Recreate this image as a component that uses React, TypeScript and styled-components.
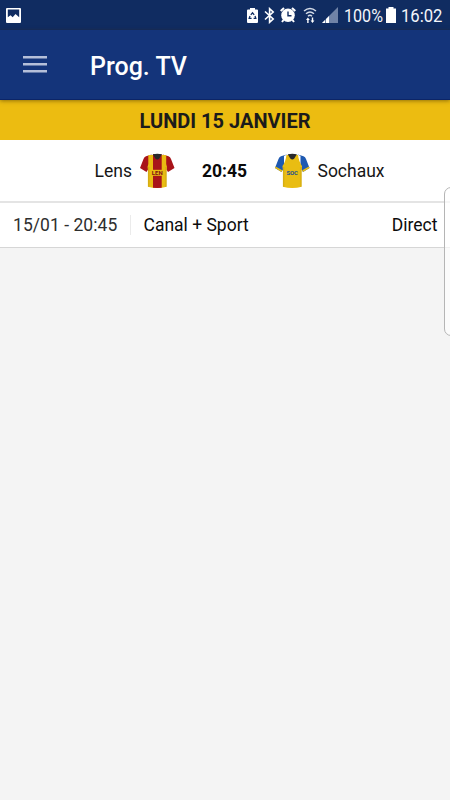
import React from "react";
import styled, { createGlobalStyle } from "styled-components";

const GlobalStyle = createGlobalStyle`
  * { box-sizing: border-box; }
  html, body { margin: 0; padding: 0; }
  body { font-family: Roboto, sans-serif; overflow: hidden; }
  svg { display: block; flex: none; }
`;

const Screen = styled.div`
  position: relative;
  width: 450px;
  height: 800px;
  overflow: hidden;
  background: #f4f4f4;
  display: flex;
  flex-direction: column;
`;

const StatusBar = styled.div`
  height: 30px;
  flex: none;
  background: #102c61;
  color: #f4f6fa;
  display: flex;
  align-items: center;
  padding: 0 7px 0 6px;
`;

const StatusIcons = styled.div`
  display: flex;
  align-items: center;
  margin-left: auto;
`;

const StatusText = styled.span<{ $width: number; $scale: number }>`
  width: ${(p) => p.$width}px;
  font-size: 18.5px;
  line-height: 30px;
  padding-top: 1px;
  white-space: nowrap;
  transform: scaleX(${(p) => p.$scale});
  transform-origin: left center;
`;

const Gap = styled.span<{ $w: number }>`
  width: ${(p) => p.$w}px;
  flex: none;
`;

const AppBar = styled.header`
  position: relative;
  z-index: 1;
  height: 70px;
  flex: none;
  background: #14347a;
  border-bottom: 1px solid #0c2567;
  box-shadow: 0 1px 4px rgba(60, 40, 0, 0.5);
  display: flex;
  align-items: center;
  padding-left: 23px;
`;

const MenuButton = styled.button`
  width: 24px;
  height: 17px;
  padding: 0;
  border: 0;
  background: none;
`;

const Title = styled.h1`
  margin: 5px 0 0 43px;
  font-size: 25px;
  font-weight: 500;
  line-height: 30px;
  color: #fff;
`;

const DateHeader = styled.h2`
  margin: 0;
  height: 40px;
  flex: none;
  background: #ecbc11;
  color: #1b1b1b;
  font-size: 20px;
  font-weight: 700;
  line-height: 42px;
  text-align: center;
`;

const MatchRow = styled.div`
  height: 63px;
  flex: none;
  background: #fff;
  border-bottom: 2px solid #e4e4e4;
  display: grid;
  grid-template-columns: 132px 43px 99px 37px 1fr;
  align-items: center;
  font-size: 17.5px;
  color: #161616;
`;

const Team = styled.span<{ $side: "home" | "away" }>`
  text-align: ${(p) => (p.$side === "home" ? "right" : "left")};
  padding-left: ${(p) => (p.$side === "away" ? 6.5 : 0)}px;
  padding-top: 1px;
`;

const ShirtSlot = styled.div<{ $inset?: number }>`
  padding-left: ${(p) => p.$inset ?? 0}px;
`;

const Kickoff = styled.strong`
  text-align: center;
  font-weight: 700;
  padding-top: 1px;
  color: #0a0a0a;
`;

const ChannelRow = styled.div`
  height: 45px;
  flex: none;
  background: #fff;
  border-bottom: 1px solid #d6d6d6;
  display: flex;
  align-items: center;
  padding: 0 12.5px 0 13px;
  font-size: 17.5px;
  line-height: 20px;
  color: #0c0c0c;
`;

const AirTime = styled.span`
  width: 118px;
  height: 20px;
  color: #2e2e2e;
  letter-spacing: 0.05px;
  border-right: 1px solid #ebebeb;
`;

const Channel = styled.span`
  flex: 1;
  padding-left: 12.5px;
`;

const EdgePanel = styled.div`
  position: absolute;
  z-index: 2;
  top: 187px;
  right: -8px;
  width: 14px;
  height: 149px;
  border: 1px solid #b5b5b5;
  border-radius: 7px;
  background: rgba(255, 255, 255, 0.65);
`;

const ShirtText = styled.text`
  font: 700 6px Roboto, sans-serif;
  text-anchor: middle;
`;

const PictureIcon = () => (
  <svg width="15" height="15" viewBox="0 0 15 15">
    <path fillRule="evenodd" fill="#fff" d="M1 0h13q1 0 1 1v13q0 1-1 1H1q-1 0-1-1V1q0-1 1-1zM1.8 1.5v7.8l2.7-2 2.2 2 2.8-3.2 3.7 3.2V1.5z" />
  </svg>
);

const RecycleBatteryIcon = () => (
  <svg width="11" height="15" viewBox="0 0 11 15">
    <path fill="#fff" d="M3 0h5v1.6h2q1 0 1 1V14q0 1-1 1H1q-1 0-1-1V2.6q0-1 1-1h2z" />
    <path fill="none" stroke="#102c61" strokeWidth="1.3" d="M3.8 6.8 5.5 4.8l1.7 2M8 8l.8 2.4H6.6M4.6 10.4H2.2L3 8" />
  </svg>
);

const BluetoothIcon = () => (
  <svg width="11" height="17" viewBox="0 0 11 17">
    <path fill="none" stroke="#fff" strokeWidth="1.6" d="M1 4.5 9.2 12 5.6 15.3V1.7L9.2 5 1 12.5" />
  </svg>
);

const AlarmIcon = () => (
  <svg width="16" height="16" viewBox="0 0 16 16">
    <circle cx="8" cy="8.2" r="6.8" fill="#fff" />
    <path stroke="#fff" strokeWidth="2" d="M.7 4 4 1M15.3 4 12 1M3.5 13 2 15M12.5 13l1.5 2" />
    <path fill="none" stroke="#102c61" strokeWidth="1.4" d="M8 4.5v4.2h3.5" />
  </svg>
);

const WifiIcon = () => (
  <svg width="14" height="17" viewBox="0 0 14 17">
    <g fill="none" stroke="#d5dce8" strokeWidth="1.5">
      <path d="M1 4Q7-1 13 4M3 6.7q4-3.5 8 0M5 9.2q2-1.8 4 0" />
    </g>
    <path fill="#fff" d="M3 13l1.9-2.5L6.8 13H5.6v3H4.2v-3zM7.6 13.5h1.2v-3h1.4v3h1.2L9.5 16z" />
  </svg>
);

const SignalIcon = () => (
  <svg width="16" height="16" viewBox="0 0 16 16">
    <path fill="#7083a7" d="M16 0v16H0z" />
    <path fill="#fff" d="M0 16l3-3v3zM4 16v-4l3-3v7z" />
  </svg>
);

const BatteryIcon = () => (
  <svg width="10" height="16" viewBox="0 0 10 16">
    <path fill="#fff" d="M2.5 0h5v1.5H10V16H0V1.5h2.5z" />
  </svg>
);

const MenuIcon = () => (
  <svg width="24" height="17" viewBox="0 0 24 17">
    <path fill="#b5bfd9" d="M0 0h24v2.5H0zM0 7h24v2.5H0zM0 14h24v2.5H0z" />
  </svg>
);

interface ShirtProps {
  id: string;
  code: string;
  body: string;
  sleeve: string;
  ink: string;
  striped?: boolean;
}

const Shirt = ({ id, code, body, sleeve, ink, striped }: ShirtProps) => (
  <svg width="37" height="37" viewBox="0 0 37 37">
    <defs>
      <linearGradient id={`${id}-shade`} x1="0" x2="1" y1="0" y2="0">
        <stop offset="0" stopColor="#000" stopOpacity=".12" />
        <stop offset=".12" stopColor="#000" stopOpacity="0" />
        <stop offset=".88" stopColor="#000" stopOpacity="0" />
        <stop offset="1" stopColor="#000" stopOpacity=".12" />
      </linearGradient>
      <clipPath id={`${id}-torso`}>
        <path d="M7.5 3.8 13.5 2.3h9.5l6 1.5.3 8L27.7 18v16.8q-9.4 2.5-18.9 0V18L7.2 12z" />
      </clipPath>
    </defs>
    <path fill={sleeve} d="M13.5 2.3 7 4.2Q5.2 4.8 4.5 7L1 16l6.5 4L10 16V4zM23 2.3l6.5 1.9q1.8.6 2.5 2.8l3.5 9-6.5 4-2.5-4V4z" />
    {!striped && <path fill={body} d="M1.6 14.6 1 16l6.5 4 .8-1.7zM34.9 14.6l.6 1.4-6.5 4-.8-1.7z" />}
    <g clipPath={`url(#${id}-torso)`}>
      {striped ? (
        <>
          <path fill={body} d="M9.3 3h17.9v9l.8 3v21H8.5V15l.8-3z" />
          <path fill={sleeve} d="M14 0h8.7v37H14z" />
        </>
      ) : (
        <path fill={body} d="M12.5 3Q11.5 10 8.5 14v23H28V14Q25 10 24 3z" />
      )}
      <path fill={`url(#${id}-shade)`} d="M8.8 15h18.9v22H8.8z" />
    </g>
    {striped && <path fill={body} d="M11.3 17.8h14v6H11.3z" />}
    <path fill="#292a2c" d="M13.7 2.3q4.6-1 9.2 0L20.3 6.5q-2 1.8-4 0z" />
    <ShirtText x="18.3" y="22.9" fill={ink} textLength={striped ? 11 : 11.5}>{code}</ShirtText>
  </svg>
);

export default function App() {
  return (
    <>
      <GlobalStyle />
      <Screen>
        <StatusBar>
          <PictureIcon />
          <StatusIcons>
            <RecycleBatteryIcon />
            <Gap $w={6} />
            <BluetoothIcon />
            <Gap $w={5} />
            <AlarmIcon />
            <Gap $w={7} />
            <WifiIcon />
            <Gap $w={5} />
            <SignalIcon />
            <Gap $w={6} />
            <StatusText $width={42} $scale={0.87}>100%</StatusText>
            <BatteryIcon />
            <Gap $w={5} />
            <StatusText $width={42} $scale={0.9}>16:02</StatusText>
          </StatusIcons>
        </StatusBar>
        <AppBar>
          <MenuButton aria-label="Menu"><MenuIcon /></MenuButton>
          <Title>Prog. TV</Title>
        </AppBar>
        <DateHeader>LUNDI 15 JANVIER</DateHeader>
        <MatchRow>
          <Team $side="home">Lens</Team>
          <ShirtSlot $inset={7}>
            <Shirt id="lens" code="LEN" body="#e9bc12" sleeve="#a8141a" ink="#801014" striped />
          </ShirtSlot>
          <Kickoff>20:45</Kickoff>
          <ShirtSlot>
            <Shirt id="sochaux" code="SOC" body="#e9bd12" sleeve="#1e59b1" ink="#24518c" />
          </ShirtSlot>
          <Team $side="away">Sochaux</Team>
        </MatchRow>
        <ChannelRow>
          <AirTime>15/01 - 20:45</AirTime>
          <Channel>Canal + Sport</Channel>
          <span>Direct</span>
        </ChannelRow>
        <EdgePanel />
      </Screen>
    </>
  );
}
